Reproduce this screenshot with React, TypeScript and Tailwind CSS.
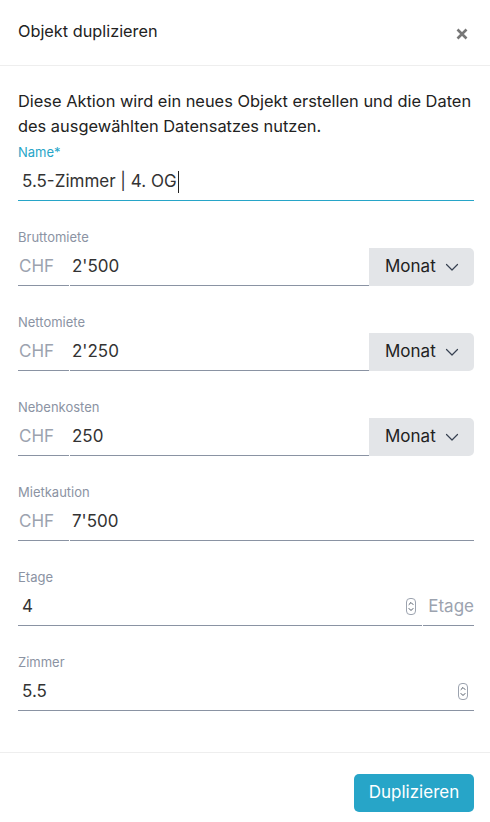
import React from "react";

const font = { fontFamily: "Inter, 'Noto Sans', sans-serif" };

function Chevron() {
  return (
    <svg width="16" height="16" viewBox="0 0 16 16" fill="none" stroke="#374151" strokeWidth="1.2" strokeLinecap="round" strokeLinejoin="round">
      <path d="M2.5 5.5 L8 11 L13.5 5.5" />
    </svg>
  );
}

function Spinner() {
  return (
    <div className="w-[10px] h-[17px] rounded-[4px] border border-[#9ca3af] flex flex-col items-center justify-center">
      <svg width="6" height="11" viewBox="0 0 6 11" fill="none" stroke="#4b5563" strokeWidth="1" strokeLinecap="round" strokeLinejoin="round">
        <path d="M1 3.5 L3 1.5 L5 3.5" />
        <path d="M1 7.5 L3 9.5 L5 7.5" />
      </svg>
    </div>
  );
}

function Label({ children, active }: { children: React.ReactNode; active?: boolean }) {
  return (
    <div className={`text-[13px] leading-[16px] ${active ? "text-[#27a5c8]" : "text-[#8b93a3]"}`}>{children}</div>
  );
}

function MoneyField({ label, value, unit }: { label: string; value: string; unit?: boolean }) {
  return (
    <div className="flex flex-col gap-[3px]">
      <Label>{label}</Label>
      <div className="flex h-[38px] items-stretch">
        <div className="w-[51px] flex items-center pl-[1px] text-[17px] text-[#9ca3af] border-b border-[#8a93a3]">CHF</div>
        <div className="flex-1 flex items-center pl-[2px] ml-[1px] text-[17px] text-[#333] border-b border-[#8a93a3]">{value}</div>
        {unit && (
          <div className="w-[105px] bg-[#e3e5e8] rounded-r-[5px] flex items-center gap-[8px] pl-[16px] text-[17px] text-[#222]">
            Monat <Chevron />
          </div>
        )}
      </div>
    </div>
  );
}

export default function App() {
  return (
    <div className="w-[490px] h-[822px] bg-white flex flex-col" style={font}>
      <div className="h-[66px] flex items-center justify-between px-[18px] border-b border-[#eeeeee] shrink-0">
        <div className="text-[16.3px] text-[#222] pb-[2px]">Objekt duplizieren</div>
        <svg width="12" height="12" viewBox="0 0 12 12" className="mr-[4px] mt-[2px]" stroke="#777" strokeWidth="2.6" strokeLinecap="butt">
          <path d="M1.5 1.5 L10.5 10.5 M10.5 1.5 L1.5 10.5" />
        </svg>
      </div>
      <div className="flex-1 flex flex-col px-[18px] pr-[16px] pt-[23px]">
        <p className="text-[16.4px] leading-[25px] text-[#222]">
          Diese Aktion wird ein neues Objekt erstellen und die Daten des ausgewählten Datensatzes nutzen.
        </p>
        <div className="flex flex-col gap-[28px] mt-[5px]">
          <div className="flex flex-col gap-[3px]">
            <Label active>Name*</Label>
            <div className="h-[38px] flex items-center pl-[4px] text-[17px] text-[#333] border-b border-[#27a5c8]">
              5.5-Zimmer | 4. OG<span className="inline-block w-[1px] h-[22px] bg-[#222] ml-[1px]" />
            </div>
          </div>
          <MoneyField label="Bruttomiete" value="2'500" unit />
          <MoneyField label="Nettomiete" value="2'250" unit />
          <MoneyField label="Nebenkosten" value="250" unit />
          <MoneyField label="Mietkaution" value="7'500" />
          <div className="flex flex-col gap-[3px]">
            <Label>Etage</Label>
            <div className="flex h-[38px] items-stretch">
              <div className="flex-1 flex items-center justify-between pl-[4px] pr-[6px] text-[17px] text-[#333] border-b border-[#8a93a3]">
                <span>4</span>
                <Spinner />
              </div>
              <div className="w-[51px] flex items-center justify-end ml-[1px] text-[17px] text-[#9ca3af] border-b border-[#8a93a3]">Etage</div>
            </div>
          </div>
          <div className="flex flex-col gap-[3px]">
            <Label>Zimmer</Label>
            <div className="h-[38px] flex items-center justify-between pl-[4px] pr-[6px] text-[17px] text-[#333] border-b border-[#8a93a3]">
              <span>5.5</span>
              <Spinner />
            </div>
          </div>
        </div>
      </div>
      <div className="h-[70px] border-t border-[#eeeeee] flex items-start justify-end px-[16px] pt-[21px] shrink-0">
        <button className="h-[38px] w-[120px] rounded-[5px] bg-[#27a5c8] text-white text-[17px]">Duplizieren</button>
      </div>
    </div>
  );
}
